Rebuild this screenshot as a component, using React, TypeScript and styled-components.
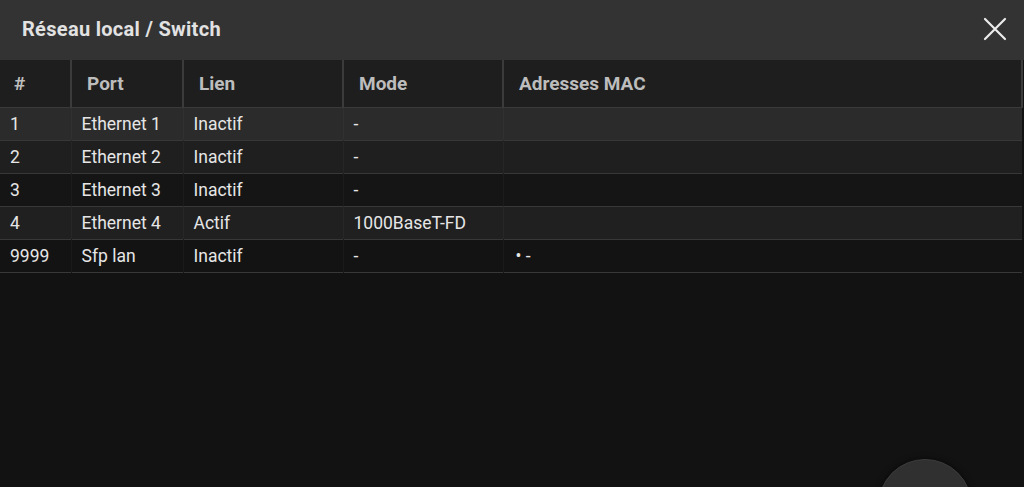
import React from 'react';
import styled, { createGlobalStyle } from 'styled-components';

type Port = { id: string; name: string; link: string; mode: string; mac: string; shade: string };

const ports: Port[] = [
  { id: '1', name: 'Ethernet 1', link: 'Inactif', mode: '-', mac: '', shade: '#2b2b2b' },
  { id: '2', name: 'Ethernet 2', link: 'Inactif', mode: '-', mac: '', shade: '#1f1f1f' },
  { id: '3', name: 'Ethernet 3', link: 'Inactif', mode: '-', mac: '', shade: '#151515' },
  { id: '4', name: 'Ethernet 4', link: 'Actif', mode: '1000BaseT-FD', mac: '', shade: '#202020' },
  { id: '9999', name: 'Sfp lan', link: 'Inactif', mode: '-', mac: '• -', shade: '#131313' },
];

const columns = [
  { label: '#', width: 71 },
  { label: 'Port', width: 112 },
  { label: 'Lien', width: 160 },
  { label: 'Mode', width: 160 },
  { label: 'Adresses MAC', width: 519 },
];

export default function App() {
  return (
    <>
      <GlobalStyle />
      <Page>
        <TitleBar>
          <Title>Réseau local / Switch</Title>
          <CloseButton aria-label="Fermer">
            <svg width="24" height="24" viewBox="0 0 24 24">
              <path d="M2 2 L22 22 M22 2 L2 22" stroke="#ececec" strokeWidth="2.2" strokeLinecap="round" />
            </svg>
          </CloseButton>
        </TitleBar>

        <Table>
          <colgroup>
            {columns.map((c) => (
              <col key={c.label} style={{ width: c.width }} />
            ))}
          </colgroup>
          <thead>
            <tr>
              {columns.map((c) => (
                <HeadCell key={c.label}>{c.label}</HeadCell>
              ))}
            </tr>
          </thead>
          <tbody>
            {ports.map((p) => (
              <Row key={p.id} $shade={p.shade}>
                <Cell>{p.id}</Cell>
                <Cell>{p.name}</Cell>
                <Cell>{p.link}</Cell>
                <Cell>{p.mode}</Cell>
                <Cell>{p.mac}</Cell>
              </Row>
            ))}
          </tbody>
        </Table>

        <Fab aria-label="Action" />
      </Page>
    </>
  );
}

const GlobalStyle = createGlobalStyle`
  html, body {
    margin: 0;
    padding: 0;
    background: #121212;
    font-family: Roboto, "Liberation Sans", sans-serif;
  }
`;

const Page = styled.div`
  position: relative;
  width: 1024px;
  height: 487px;
  overflow: hidden;
  background: #121212;
`;

const TitleBar = styled.header`
  height: 60px;
  background: #333333;
  display: flex;
  align-items: center;
  justify-content: space-between;
  padding: 0 17px 2px 22px;
  box-sizing: border-box;
`;

const Title = styled.h1`
  margin: 0;
  font-size: 20px;
  font-weight: 700;
  letter-spacing: 0.3px;
  color: #e2e2e2;
`;

const CloseButton = styled.button`
  background: none;
  border: none;
  padding: 0;
  width: 24px;
  height: 24px;
  cursor: pointer;
  display: flex;
`;

const Table = styled.table`
  width: 1022px;
  border-collapse: collapse;
  table-layout: fixed;
`;

const HeadCell = styled.th`
  height: 47px;
  padding: 0 0 0 15px;
  text-align: left;
  font-size: 19px;
  font-weight: 700;
  color: #bdbdbd;
  background: #1e1e1e;
  border-left: 2px solid #3b3b3b;
  border-bottom: 1px solid #3a3a3a;
  box-sizing: border-box;

  &:first-child {
    border-left: none;
    padding-left: 14px;
  }
  &:last-child {
    border-right: 2px solid #3b3b3b;
  }
`;

const Row = styled.tr<{ $shade: string }>`
  background: ${({ $shade }) => $shade};
  border-bottom: 1px solid #383838;
`;

const Cell = styled.td`
  height: 32px;
  padding: 0 0 0 10px;
  font-size: 17.5px;
  color: #e6e6e6;
  white-space: nowrap;
  border-left: 1px solid rgba(255, 255, 255, 0.03);

  &:first-child {
    padding-left: 10px;
    border-left: none;
  }
  &:last-child {
    padding-left: 12px;
  }
`;

const Fab = styled.button`
  position: absolute;
  left: 878px;
  top: 459px;
  width: 94px;
  height: 94px;
  border-radius: 50%;
  background: #303030;
  border: 1px solid #3c3c3c;
  box-shadow: 0 0 6px rgba(0, 0, 0, 0.6);
  padding: 0;
`;
